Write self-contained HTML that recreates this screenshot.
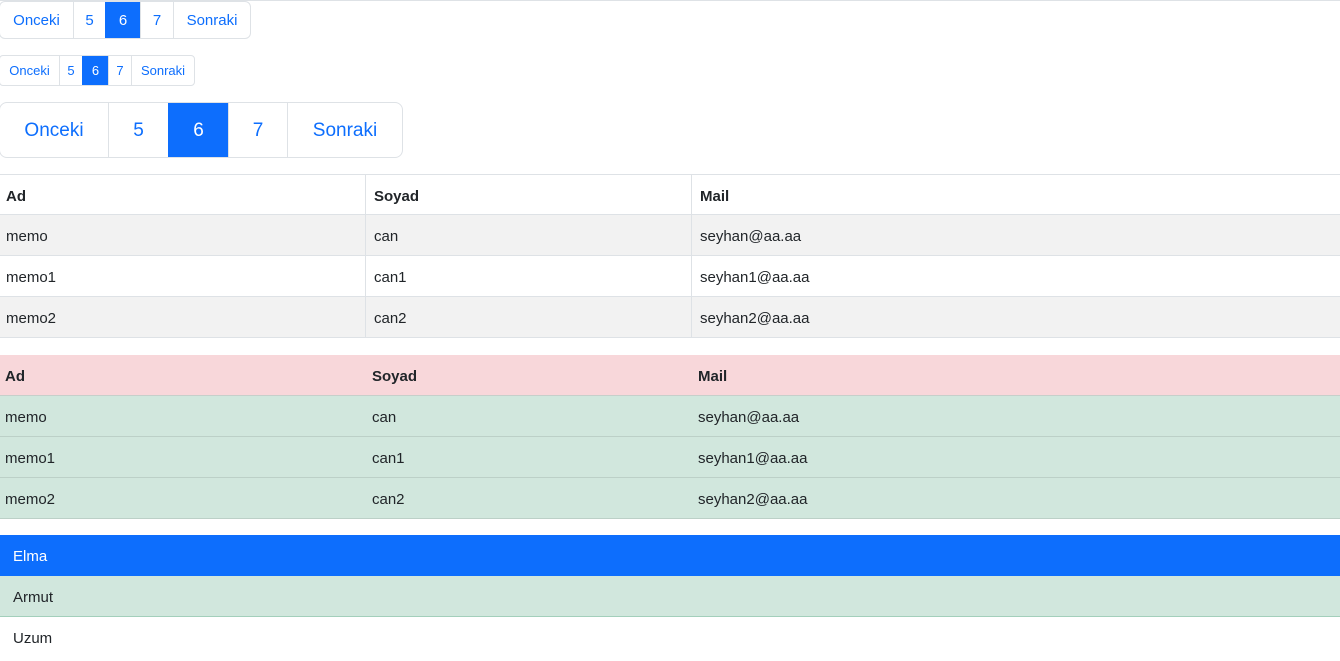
<!DOCTYPE html>
<html><head><style>
*{box-sizing:border-box;margin:0;padding:0}
body{width:1340px;height:643px;overflow:hidden;background:#fff;font-family:"Liberation Sans",sans-serif;color:#212529;position:relative}
.pg{position:absolute;left:-1px;display:flex;border:1px solid #dee2e6;border-radius:6px;overflow:hidden}
.pg span{display:flex;align-items:center;justify-content:center;color:#0d6efd;border-left:1px solid #dee2e6}
.pg span:first-child{border-left:none}
.pg span.a{background:#0d6efd;color:#fff;border-color:#0d6efd}
.row{position:absolute;left:0;width:1340px;height:41px;border-bottom:1px solid #dee2e6;font-size:15px}
.row div{position:absolute;top:0;height:40px;line-height:44px}
.b{font-weight:bold}
</style></head><body>
<div style="position:absolute;top:0;left:0;width:1340px;border-top:1px solid #dee2e6"></div>
<div class="pg" style="top:1px;height:38px;font-size:15px">
<span style="width:73px">Onceki</span><span style="width:32px">5</span><span class="a" style="width:35px">6</span><span style="width:33px">7</span><span style="width:77px">Sonraki</span></div>
<div class="pg" style="top:55px;height:31px;font-size:13px;border-radius:4px">
<span style="width:59px">Onceki</span><span style="width:23px">5</span><span class="a" style="width:26px">6</span><span style="width:23px">7</span><span style="width:63px">Sonraki</span></div>
<div class="pg" style="top:102px;height:56px;font-size:19px;border-radius:8px">
<span style="width:108px;padding-top:2px">Onceki</span><span style="width:60px;padding-top:2px">5</span><span class="a" style="width:60px;padding-top:2px">6</span><span style="width:59px;padding-top:2px">7</span><span style="width:115px;padding-top:2px">Sonraki</span></div>

<div style="position:absolute;top:174px;left:0;width:1340px;border-top:1px solid #dee2e6"></div>
<div class="row b" style="top:175px;height:40px"><div style="left:6px">Ad</div><div style="left:365px;border-left:1px solid #dee2e6;padding-left:8px">Soyad</div><div style="left:691px;border-left:1px solid #dee2e6;padding-left:8px">Mail</div></div>
<div class="row" style="top:215px;background:#f2f2f2"><div style="left:6px">memo</div><div style="left:365px;border-left:1px solid #dee2e6;padding-left:8px">can</div><div style="left:691px;border-left:1px solid #dee2e6;padding-left:8px">seyhan@aa.aa</div></div>
<div class="row" style="top:256px"><div style="left:6px">memo1</div><div style="left:365px;border-left:1px solid #dee2e6;padding-left:8px">can1</div><div style="left:691px;border-left:1px solid #dee2e6;padding-left:8px">seyhan1@aa.aa</div></div>
<div class="row" style="top:297px;background:#f2f2f2"><div style="left:6px">memo2</div><div style="left:365px;border-left:1px solid #dee2e6;padding-left:8px">can2</div><div style="left:691px;border-left:1px solid #dee2e6;padding-left:8px">seyhan2@aa.aa</div></div>

<div class="row b" style="top:355px;background:#f8d7da;border-color:#c6cfca"><div style="left:5px">Ad</div><div style="left:372px">Soyad</div><div style="left:698px">Mail</div></div>
<div class="row" style="top:396px;background:#d1e7dd;border-color:#bcd0c7"><div style="left:5px">memo</div><div style="left:372px">can</div><div style="left:698px">seyhan@aa.aa</div></div>
<div class="row" style="top:437px;background:#d1e7dd;border-color:#bcd0c7"><div style="left:5px">memo1</div><div style="left:372px">can1</div><div style="left:698px">seyhan1@aa.aa</div></div>
<div class="row" style="top:478px;background:#d1e7dd;border-color:#bcd0c7"><div style="left:5px">memo2</div><div style="left:372px">can2</div><div style="left:698px">seyhan2@aa.aa</div></div>

<div class="row" style="top:535px;background:#0d6efd;color:#fff;border:none"><div style="left:13px">Elma</div></div>
<div class="row" style="top:576px;background:#d1e7dd;border-color:#a3cfbb"><div style="left:13px">Armut</div></div>
<div class="row" style="top:617px;border:none"><div style="left:13px">Uzum</div></div>
</body></html>
